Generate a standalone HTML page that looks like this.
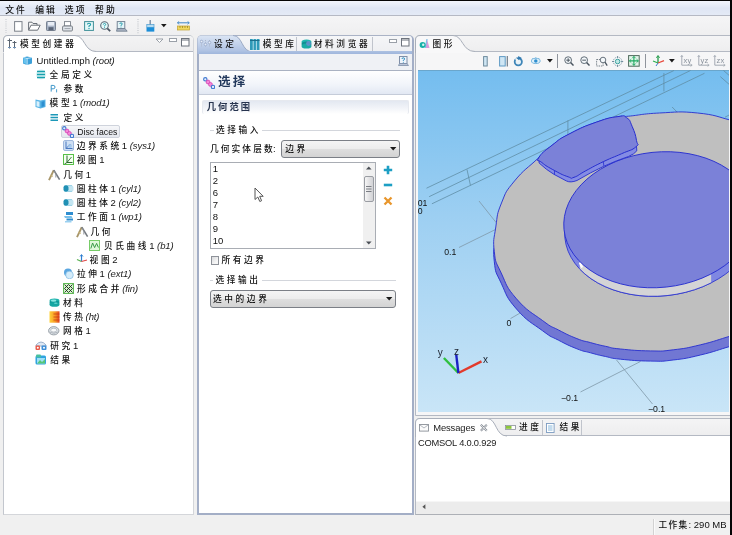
<!DOCTYPE html>
<html lang="zh">
<head>
<meta charset="utf-8">
<title>COMSOL Multiphysics</title>
<style>
*{box-sizing:border-box;margin:0;padding:0}
html,body{width:732px;height:535px;overflow:hidden;background:#f0f0f0}
body{position:relative;font-family:"Liberation Sans","Noto Sans CJK SC",sans-serif;font-size:9.5px;color:#121212}
#app{position:absolute;left:-4px;top:-4px;width:740px;height:543px;background:#f0f0f0;overflow:hidden;filter:blur(0.55px)}
#in{left:4px;top:4px;width:732px;height:535px}
#app div,#app span,#app svg{position:absolute}
#app span.c,#app i{position:static}
.c{font-size:8.7px;letter-spacing:2.6px;font-weight:500}
.t{white-space:nowrap;line-height:14px;height:14px}
.t i{letter-spacing:-0.1px;color:#222}
.panel{background:#fff;border:1px solid #b9bec8;border-radius:5px 5px 0 0}
</style>
</head>
<body>
<div id="app"><div id="in">
<div style="left:0;top:0;width:730px;height:15px;background:linear-gradient(#f4f7fd,#dfe6f4 55%,#e4eaf6)"></div>
<div class="t" style="left:5.2px;top:2.6px;font-size:8.8px;letter-spacing:2.1px;font-weight:500;color:#111">文件</div>
<div class="t" style="left:35.2px;top:2.6px;font-size:8.8px;letter-spacing:2.1px;font-weight:500;color:#111">编辑</div>
<div class="t" style="left:64.8px;top:2.6px;font-size:8.8px;letter-spacing:2.1px;font-weight:500;color:#111">选项</div>
<div class="t" style="left:95px;top:2.6px;font-size:8.8px;letter-spacing:2.1px;font-weight:500;color:#111">帮助</div>
<div style="left:0;top:15px;width:730px;height:1px;background:#b5b9c4"></div>
<div style="left:-4px;top:-4px;width:740px;height:5.3px;background:#050505"></div>
<div style="left:0;top:16px;width:730px;height:19px;background:linear-gradient(#f5f5f6,#efeff0)"></div>
<svg style="left:5px;top:19px" width="2" height="14" viewBox="0 0 2 14"><path d="M1 0V14" stroke="#c9ccd2" stroke-width="1.2" stroke-dasharray="1 1.2"/></svg>
<svg style="left:13.5px;top:20.5px" width="9" height="11" viewBox="0 0 9 11"><rect x="0.6" y="0.6" width="7.4" height="9.6" fill="#fff" stroke="#7c828a" stroke-width="1"/></svg>
<svg style="left:28px;top:21px" width="13" height="10" viewBox="0 0 13 10"><path d="M0.6 9.2V1.2H4L5 2.5H9V4.2" fill="#fafafa" stroke="#6a7078" stroke-width="1"/><path d="M0.6 9.2L3 4.2H12.2L9.6 9.2Z" fill="#fff" stroke="#6a7078" stroke-width="1"/></svg>
<svg style="left:45.5px;top:20.8px" width="10" height="10" viewBox="0 0 10 10"><rect x="0.5" y="0.5" width="9" height="9" rx="0.8" fill="#a9b4c6" stroke="#6e7888" stroke-width="0.9"/><rect x="2" y="1" width="6" height="3.6" fill="#e8edf5"/><rect x="2.5" y="6.2" width="5" height="3" fill="#596477"/></svg>
<svg style="left:61.5px;top:20.5px" width="11" height="11" viewBox="0 0 11 11"><rect x="2.5" y="0.6" width="6" height="4.4" fill="#fff" stroke="#7c828a" stroke-width="0.9"/><rect x="0.6" y="5" width="9.8" height="5" rx="1" fill="#e2e6ec" stroke="#6e747c" stroke-width="0.9"/><path d="M2.5 7.6H8.5" stroke="#8a9098" stroke-width="0.8"/></svg>
<svg style="left:84px;top:20.8px" width="10" height="10" viewBox="0 0 10 10"><rect x="0.6" y="0.6" width="8.8" height="8.8" fill="#e4f8f8" stroke="#3f8f98" stroke-width="1"/><path d="M3.4 3.6Q3.4 2.2 5 2.2Q6.6 2.2 6.6 3.6Q6.6 4.5 5 5.1V6" stroke="#1f9aa8" fill="none" stroke-width="1.1"/><circle cx="5" cy="7.5" r="0.65" fill="#1f9aa8"/></svg>
<svg style="left:100px;top:20.5px" width="11" height="11" viewBox="0 0 11 11"><circle cx="4.5" cy="4.5" r="3.8" fill="#e4f8f8" stroke="#5a6a78" stroke-width="1.1"/><path d="M7.3 7.3L10.2 10.2" stroke="#4a5562" stroke-width="1.7"/><path d="M3.3 3.6Q3.3 2.5 4.5 2.5Q5.7 2.5 5.7 3.6Q5.7 4.3 4.5 4.7V5.3" stroke="#1f9aa8" fill="none" stroke-width="0.9"/><circle cx="4.5" cy="6.3" r="0.5" fill="#1f9aa8"/></svg>
<svg style="left:116px;top:20.5px" width="12" height="11" viewBox="0 0 12 11"><rect x="1.2" y="0.6" width="7.6" height="7" fill="#e4f4f8" stroke="#6a7a8c" stroke-width="0.9"/><path d="M0.5 10.2H11.2L9 7.6H1.2Z" fill="#aab4c4" stroke="#6a7a8c" stroke-width="0.8"/><path d="M3.7 3Q3.7 1.9 5 1.9Q6.3 1.9 6.3 3Q6.3 3.8 5 4.2V4.9" stroke="#1f9aa8" fill="none" stroke-width="0.9"/><circle cx="5" cy="6" r="0.5" fill="#1f9aa8"/></svg>
<svg style="left:136.5px;top:18.5px" width="2" height="15" viewBox="0 0 2 15"><path d="M1 0V15" stroke="#c4c7cd" stroke-width="1.2" stroke-dasharray="1 1.2"/></svg>
<svg style="left:146px;top:20px" width="9" height="12" viewBox="0 0 9 12"><path d="M4.2 0V5" stroke="#7a8fa8" stroke-width="1.4"/><rect x="0.8" y="4.6" width="7.2" height="3" fill="#b8dcf0" stroke="#4a9ad0" stroke-width="0.7"/><rect x="0.5" y="7.4" width="7.8" height="4.2" fill="#1c8ed8"/></svg>
<svg style="left:160.8px;top:23.8px" width="6" height="4" viewBox="0 0 6 4"><path d="M0 0H5.6L2.8 3.3Z" fill="#1a1a1a"/></svg>
<svg style="left:176.5px;top:21px" width="13" height="10" viewBox="0 0 13 10"><path d="M0.5 1.8H12.2" stroke="#3f86c8" stroke-width="1"/><path d="M2.2 0.3L0.4 1.8L2.2 3.3M10.5 0.3L12.3 1.8L10.5 3.3" stroke="#3f86c8" fill="none" stroke-width="0.8"/><rect x="0.5" y="5" width="12" height="4" fill="#f0d860" stroke="#c0a030" stroke-width="0.7"/><path d="M3 5V7M5.5 5V7M8 5V7M10.5 5V7" stroke="#9a8020" stroke-width="0.7"/></svg>
<div class="panel" style="left:3px;top:35px;width:191px;height:480px;border-color:#c3c7ce #d4d6da #d4d6da #c3c7ce"></div>
<div style="left:4px;top:36px;width:189px;height:15px;background:linear-gradient(#f3f3f4,#ededee);border-radius:4px 4px 0 0"></div>
<div style="left:4px;top:51px;width:189px;height:1px;background:#b4b9c3"></div>
<svg style="left:3px;top:35px" width="100" height="18" viewBox="0 0 100 18"><path d="M0.5 17 L0.5 5 Q0.5 0.5 5 0.5 L72 0.5 C82 0.5 81 16.5 93 16.5 L93 18 L0.5 18 Z" fill="#fff"/><path d="M0.5 17 L0.5 5 Q0.5 0.5 5 0.5 L72 0.5 C82 0.5 81 16.5 93 16.5" fill="none" stroke="#a9afba" stroke-width="1"/></svg>
<svg style="left:7px;top:38px" width="10" height="11" viewBox="0 0 10 11"><path d="M2.5 0.5V10.5M0.5 2.5H5M7.5 3V10.5M5.5 4.5H9.5" stroke="#5a6470" stroke-width="1" fill="none"/><path d="M1 9.5H4M6 9.5H9" stroke="#6a8fb8" stroke-width="1"/></svg>
<div class="t" style="left:20px;top:37.3px;color:#111"><span class="c">模型创建器</span></div>
<svg style="left:155px;top:38px" width="9" height="6" viewBox="0 0 9 6"><path d="M1 1H8L4.5 4.5Z" fill="#fff" stroke="#9aa0a8" stroke-width="1"/></svg>
<svg style="left:169px;top:38px" width="9" height="5" viewBox="0 0 9 5"><rect x="0.5" y="0.5" width="7" height="3" fill="#fff" stroke="#9aa0a8"/></svg>
<svg style="left:181px;top:38px" width="9" height="9" viewBox="0 0 9 9"><rect x="0.5" y="0.5" width="7.5" height="7.5" fill="#fff" stroke="#6d737c"/><path d="M0.5 2H8" stroke="#6d737c"/></svg>
<svg style="left:22px;top:54.8px" width="11" height="11" viewBox="0 0 11 11"><path d="M1 2.5L5 1.5L10 2.5V8.5L5 10L1 8.5Z" fill="#3b9fd8"/><path d="M1 2.5L5 3.5L10 2.5" stroke="#bfe6fa" fill="none"/><path d="M5 3.5V10" stroke="#d9f1ff"/><path d="M1.5 3L4.5 4V9L1.5 8Z" fill="#69c3ee"/></svg>
<div class="t" style="left:36.6px;top:53.7px">Untitled.mph <i>(root)</i></div>
<svg style="left:36px;top:69.03999999999999px" width="10" height="11" viewBox="0 0 10 11"><circle cx="5" cy="5.5" r="5" fill="#bfe9ee" opacity="0.6"/><path d="M1 2.5H9M1 5.5H9M1 8.5H9" stroke="#17a0ad" stroke-width="1.7"/></svg>
<div class="t" style="left:49.6px;top:67.9px"><span class="c">全局定义</span></div>
<svg style="left:50.4px;top:83.28px" width="8" height="11" viewBox="0 0 8 11"><path d="M1.2 8.6V2.4H3.2Q5 2.4 5 4.1Q5 5.8 3.2 5.8H1.2" fill="none" stroke="#3a94c8" stroke-width="1"/><path d="M6.6 6.2V9.4" stroke="#3a94c8" stroke-width="0.9"/></svg>
<div class="t" style="left:63.5px;top:82.2px"><span class="c">参数</span></div>
<svg style="left:35px;top:97.52px" width="11" height="11" viewBox="0 0 11 11"><path d="M0.5 1.5L5.5 2.5L10.5 1.5V9L5.5 10.5L0.5 9Z" fill="#58b4e6"/><path d="M1.5 3L4.5 3.8V9L1.5 8.2Z" fill="#d8f0fc"/><path d="M6.5 3.8L9.5 3V8.2L6.5 9Z" fill="#2d8fd0"/></svg>
<div class="t" style="left:49.6px;top:96.4px"><span class="c">模型</span>1 <i>(mod1)</i></div>
<svg style="left:50.4px;top:111.75999999999999px" width="9" height="11" viewBox="0 0 9 11"><path d="M0.5 2.8H8M0.5 5.5H8M0.5 8.2H8" stroke="#1c98b8" stroke-width="1.5"/></svg>
<div class="t" style="left:63.5px;top:110.7px"><span class="c">定义</span></div>
<div style="left:60.5px;top:125.2px;width:59px;height:12.6px;background:linear-gradient(#f6f7f9,#e4e7ee);border:1px solid #cfd3dc;border-radius:2px"></div>
<svg style="left:62px;top:126.0px" width="12" height="12" viewBox="0 0 12 12"><path d="M2 2L10 10" stroke="#4a7fd0" stroke-width="1.4"/><circle cx="2.3" cy="2.3" r="1.7" fill="#eaf2ff" stroke="#3f78d0" stroke-width="1.1"/><circle cx="5" cy="5" r="1.9" fill="#f48ad8" stroke="#d848b8" stroke-width="0.9"/><circle cx="7.4" cy="7.4" r="1.9" fill="#f48ad8" stroke="#d848b8" stroke-width="0.9"/><circle cx="10" cy="10" r="1.7" fill="#eaf2ff" stroke="#3f78d0" stroke-width="1.1"/></svg>
<div class="t" style="left:77.3px;top:124.9px"><span style="position:static;font-size:8.7px">Disc faces</span></div>
<svg style="left:62.5px;top:140.24px" width="11" height="11" viewBox="0 0 11 11"><rect x="0.5" y="0.5" width="10" height="10" rx="1.5" fill="#cfe0f4" stroke="#9fb8dc"/><path d="M3 1.5V8.5H9.5" stroke="#4a78c0" fill="none"/><path d="M3 8.5L7.5 4" stroke="#4a78c0"/><circle cx="7" cy="6" r="2" fill="#9fc4ea" opacity="0.8"/></svg>
<div class="t" style="left:76.7px;top:139.1px"><span class="c">边界系统</span>1 <i>(sys1)</i></div>
<svg style="left:62.5px;top:154.48000000000002px" width="11" height="11" viewBox="0 0 11 11"><rect x="0.5" y="0.5" width="10" height="10" fill="#f4fff0" stroke="#58c048"/><path d="M4 1.5V8.5H9.5" stroke="#2c6a30" fill="none"/><path d="M4 8.5L1.5 10M4 8.5L8.5 3" stroke="#2c6a30" stroke-width="0.9"/></svg>
<div class="t" style="left:76.7px;top:153.4px"><span class="c">视图</span>1</div>
<svg style="left:48.4px;top:168.72px" width="13" height="12" viewBox="0 0 13 12"><path d="M1 11.2L5.8 1.2" stroke="#a8966a" stroke-width="1.9"/><path d="M5.8 1.2L11.6 10.6" stroke="#74797f" stroke-width="1.6"/><path d="M5.8 1.5Q9 4.5 7.8 8.5" stroke="#8a8f96" stroke-width="0.9" fill="none"/><path d="M2.2 6.2L5 7.4" stroke="#c8b478" stroke-width="1"/></svg>
<div class="t" style="left:63.2px;top:167.6px"><span class="c">几何</span>1</div>
<svg style="left:62.8px;top:182.95999999999998px" width="11" height="11" viewBox="0 0 11 11"><rect x="1" y="2.2" width="9.5" height="6.6" rx="2.6" fill="#c4e6f2"/><rect x="0.5" y="2.2" width="5" height="6.6" rx="2.2" fill="#2090b4"/><path d="M4.5 2.6H9M4.5 8.4H9" stroke="#86c8e0" stroke-width="0.8"/></svg>
<div class="t" style="left:76.7px;top:181.9px"><span class="c">圆柱体</span>1 <i>(cyl1)</i></div>
<svg style="left:62.8px;top:197.2px" width="11" height="11" viewBox="0 0 11 11"><rect x="1" y="2.2" width="9.5" height="6.6" rx="2.6" fill="#c4e6f2"/><rect x="0.5" y="2.2" width="5" height="6.6" rx="2.2" fill="#2090b4"/><path d="M4.5 2.6H9M4.5 8.4H9" stroke="#86c8e0" stroke-width="0.8"/></svg>
<div class="t" style="left:76.7px;top:196.1px"><span class="c">圆柱体</span>2 <i>(cyl2)</i></div>
<svg style="left:62.8px;top:211.44px" width="11" height="12" viewBox="0 0 11 12"><path d="M3 1H10V4H3Z" fill="#2f8ed0"/><path d="M1 5H8.5L9.5 7H2Z" fill="#78c0ea"/><path d="M3.5 7.5H10V9.5H3.5Z" fill="#2f8ed0"/><path d="M2 10H8.5V11.5H2Z" fill="#9ad0f0"/></svg>
<div class="t" style="left:76.7px;top:210.3px"><span class="c">工作面</span>1 <i>(wp1)</i></div>
<svg style="left:75.5px;top:225.68px" width="13" height="12" viewBox="0 0 13 12"><path d="M1 11.2L5.8 1.2" stroke="#a8966a" stroke-width="1.9"/><path d="M5.8 1.2L11.6 10.6" stroke="#74797f" stroke-width="1.6"/><path d="M5.8 1.5Q9 4.5 7.8 8.5" stroke="#8a8f96" stroke-width="0.9" fill="none"/><path d="M2.2 6.2L5 7.4" stroke="#c8b478" stroke-width="1"/></svg>
<div class="t" style="left:90.5px;top:224.6px"><span class="c">几何</span></div>
<svg style="left:89.4px;top:239.92000000000002px" width="11" height="11" viewBox="0 0 11 11"><rect x="0.5" y="0.5" width="10" height="10" fill="#e0f8da" stroke="#78cc68"/><path d="M1.8 8.5L3.6 3L5.6 7.6L7.6 3.4L9.4 7.5" stroke="#3a9a48" fill="none" stroke-width="1"/></svg>
<div class="t" style="left:104px;top:238.8px"><span class="c">贝氏曲线</span>1 <i>(b1)</i></div>
<svg style="left:75.5px;top:254.16000000000003px" width="12" height="11" viewBox="0 0 12 11"><path d="M5.5 1V7.5" stroke="#2f7fd0" stroke-width="1.2"/><path d="M5.5 7.5L1 5.5" stroke="#58b050" stroke-width="1.1"/><path d="M5.5 7.5L11 6" stroke="#e04848" stroke-width="1.1"/><path d="M4 2.5L5.5 0.5L7 2.5" stroke="#2f7fd0" fill="none" stroke-width="0.9"/></svg>
<div class="t" style="left:89.6px;top:253.1px"><span class="c">视图</span>2</div>
<svg style="left:62.8px;top:268.4px" width="11" height="11" viewBox="0 0 11 11"><circle cx="5" cy="4.5" r="4" fill="#5aa6e0"/><circle cx="6.5" cy="7" r="3.8" fill="#d4ecfa" stroke="#8cc0e4" stroke-width="0.8"/></svg>
<div class="t" style="left:77px;top:267.3px"><span class="c">拉伸</span>1 <i>(ext1)</i></div>
<svg style="left:62.5px;top:282.64px" width="11" height="11" viewBox="0 0 11 11"><rect x="0.5" y="0.5" width="10" height="10" fill="#d6f4ce" stroke="#62bc58"/><path d="M1.5 9.5L9.5 1.5M1.5 5.5L5.5 1.5M5.5 9.5L9.5 5.5M1.5 1.5L9.5 9.5M1.5 5.5L5.5 9.5M5.5 1.5L9.5 5.5" stroke="#1c2a1c" stroke-width="0.9"/></svg>
<div class="t" style="left:77px;top:281.5px"><span class="c">形成合并</span><i>(fin)</i></div>
<svg style="left:48.7px;top:296.88px" width="11" height="11" viewBox="0 0 11 11"><ellipse cx="5.5" cy="4" rx="5" ry="2.4" fill="#1fb2ac"/><ellipse cx="5.5" cy="5.8" rx="5" ry="2.4" fill="#0f9696"/><ellipse cx="5.5" cy="7.4" rx="5" ry="2.4" fill="#16a6a2"/><ellipse cx="4.6" cy="3.7" rx="2.8" ry="1.1" fill="#8ae6e0"/><ellipse cx="6.8" cy="6.2" rx="1.8" ry="0.8" fill="#5fd0cc"/></svg>
<div class="t" style="left:63px;top:295.8px"><span class="c">材料</span></div>
<svg style="left:48.7px;top:311.12px" width="11" height="12" viewBox="0 0 11 12"><defs><linearGradient id="hg" x1="0" x2="1" y1="0" y2="0"><stop offset="0" stop-color="#ffd23a"/><stop offset="0.55" stop-color="#f79a24"/><stop offset="1" stop-color="#e0401c"/></linearGradient></defs><rect x="0.5" y="0.3" width="10" height="11.4" fill="url(#hg)"/><path d="M4.5 3H10.5M4.5 6H10.5M4.5 9H10.5" stroke="#c02c10" stroke-width="0.9" opacity="0.75"/></svg>
<div class="t" style="left:63px;top:310.0px"><span class="c">传热</span><i>(ht)</i></div>
<svg style="left:48px;top:326.36px" width="11.5" height="9.5" viewBox="0 0 13 11"><ellipse cx="6.5" cy="5.5" rx="6" ry="4.8" fill="#dfe4e8" stroke="#8f979f"/><ellipse cx="6.5" cy="4.8" rx="3.6" ry="2.2" fill="#f8fafb" stroke="#a3abb3" stroke-width="0.8"/><path d="M1.5 7Q6.5 10 11.5 7" stroke="#9aa2aa" fill="none" stroke-width="0.8"/></svg>
<div class="t" style="left:63px;top:324.3px"><span class="c">网格</span>1</div>
<svg style="left:34.8px;top:339.6px" width="12" height="11" viewBox="0 0 12 11"><path d="M1 5Q6 -1 11 5V6H1Z" fill="#dfe9f4" stroke="#88a0c0" stroke-width="0.8"/><rect x="0.5" y="5.5" width="4.5" height="4.5" rx="1" fill="#e85a4a"/><rect x="6.5" y="5.5" width="5" height="4.5" rx="1" fill="#3f8fd8"/><circle cx="2.8" cy="7.8" r="1" fill="#fff"/><circle cx="9" cy="7.8" r="1" fill="#fff"/></svg>
<div class="t" style="left:50.3px;top:338.5px"><span class="c">研究</span>1</div>
<svg style="left:35px;top:353.84000000000003px" width="12" height="11" viewBox="0 0 12 11"><rect x="0.5" y="1.5" width="10.5" height="9" rx="1.5" fill="#2fa4e0"/><rect x="2" y="4" width="8" height="5.5" fill="#9fe0f8"/><rect x="1" y="0.5" width="5" height="3" rx="1" fill="#48c0a0"/><path d="M2 9.5L5 6L7 8L10 5V9.5Z" fill="#58c878"/></svg>
<div class="t" style="left:50.3px;top:352.7px"><span class="c">结果</span></div>
<div style="left:196.5px;top:35px;width:217px;height:480px;background:#fff;border:2px solid #a3aec6;border-top:1px solid #aab3c6;border-radius:5px 5px 0 0"></div>
<div style="left:198.5px;top:36px;width:213px;height:15.5px;background:linear-gradient(#f5f6f8,#eeeff2);border-radius:4px 4px 0 0"></div>
<svg style="left:197px;top:35px" width="62" height="19" viewBox="0 0 62 19"><defs><linearGradient id="tg" x1="0" x2="0" y1="0" y2="1"><stop offset="0" stop-color="#dbe5f4"/><stop offset="1" stop-color="#a6bbdf"/></linearGradient></defs><path d="M0.5 19 L0.5 5 Q0.5 0.5 5 0.5 L36 0.5 C46 0.5 44 17 56 17 L62 17 L62 19 Z" fill="url(#tg)"/><path d="M36 0.5 C46 0.5 44 17 56 17" fill="none" stroke="#9aa9c4" stroke-width="1"/></svg>
<div style="left:198.5px;top:51px;width:213px;height:2.5px;background:linear-gradient(#adc1e2,#9fb6dc)"></div>
<div style="left:198.5px;top:53.5px;width:213px;height:16.5px;background:#eff1f5"></div>
<div style="left:198.5px;top:70px;width:213px;height:1px;background:#aab2c2"></div>
<svg style="left:200px;top:39px" width="12" height="9" viewBox="0 0 12 9"><path d="M1.5 1V8M5.5 1V8M9.5 1V8" stroke="#aeb8cc" stroke-width="1" stroke-dasharray="1.2 1"/><circle cx="1.5" cy="2.5" r="1.3" fill="#e8eef8" stroke="#8fa2c4" stroke-width="0.7"/><circle cx="5.5" cy="5.5" r="1.3" fill="#e8eef8" stroke="#8fa2c4" stroke-width="0.7"/><circle cx="9.5" cy="3.5" r="1.3" fill="#e8eef8" stroke="#8fa2c4" stroke-width="0.7"/></svg>
<div class="t" style="left:214px;top:37.3px;color:#111"><span class="c">设定</span></div>
<svg style="left:250px;top:38.5px" width="10" height="11" viewBox="0 0 10 11"><rect x="0" y="0" width="9.5" height="11" fill="#2f9ab8"/><path d="M3.2 0V11M6.4 0V11" stroke="#bfe4ee" stroke-width="0.9"/><path d="M0 1.5H9.5" stroke="#1c6f8c" stroke-width="1"/></svg>
<div class="t" style="left:262.7px;top:37.3px;color:#111"><span class="c">模型库</span></div>
<div style="left:296px;top:37px;width:1px;height:14px;background:#c0c4cc"></div>
<svg style="left:300.5px;top:39px" width="11" height="10" viewBox="0 0 11 10"><ellipse cx="5.5" cy="3" rx="5" ry="2.6" fill="#1fb6b0"/><ellipse cx="5.5" cy="5" rx="5" ry="2.6" fill="#0f8f92"/><ellipse cx="5.5" cy="7" rx="5" ry="2.6" fill="#18aaa6"/><circle cx="7.5" cy="4.5" r="2.4" fill="#6a8fd0" opacity="0.85"/></svg>
<div class="t" style="left:313.8px;top:37.3px;color:#111"><span class="c">材料浏览器</span></div>
<div style="left:371.5px;top:37px;width:1px;height:14px;background:#c0c4cc"></div>
<svg style="left:389px;top:38.5px" width="9" height="5" viewBox="0 0 9 5"><rect x="0.5" y="0.5" width="7" height="3" fill="#fff" stroke="#9aa0a8"/></svg>
<svg style="left:400.5px;top:38px" width="9" height="9" viewBox="0 0 9 9"><rect x="0.5" y="0.5" width="7.5" height="7.5" fill="#fff" stroke="#6d737c"/><path d="M0.5 2H8" stroke="#6d737c"/></svg>
<svg style="left:398px;top:55.5px" width="11" height="11" viewBox="0 0 11 11"><rect x="1.5" y="0.5" width="7.5" height="7" fill="#eef4fb" stroke="#7f8fa8"/><path d="M0.5 9.5H10.5L9 7.5H1.5Z" fill="#b8c4d8" stroke="#7f8fa8" stroke-width="0.8"/><path d="M4 3Q4 1.8 5.3 1.8Q6.6 1.8 6.6 3Q6.6 3.8 5.3 4.3V5" stroke="#2f8fc0" fill="none" stroke-width="1"/><circle cx="5.3" cy="6.2" r="0.5" fill="#2f8fc0"/></svg>
<div style="left:198.5px;top:71px;width:213px;height:23px;background:linear-gradient(#ffffff,#f1f4fa 60%,#e2e8f3)"></div>
<div style="left:198.5px;top:94px;width:213px;height:1px;background:#c5ccd9"></div>
<svg style="left:203px;top:76.5px" width="12" height="12" viewBox="0 0 12 12"><path d="M2 2L10 10" stroke="#4a7fd0" stroke-width="1.4"/><circle cx="2.3" cy="2.3" r="1.7" fill="#eaf2ff" stroke="#3f78d0" stroke-width="1.1"/><circle cx="5" cy="5" r="1.9" fill="#f48ad8" stroke="#d848b8" stroke-width="0.9"/><circle cx="7.4" cy="7.4" r="1.9" fill="#f48ad8" stroke="#d848b8" stroke-width="0.9"/><circle cx="10" cy="10" r="1.7" fill="#eaf2ff" stroke="#3f78d0" stroke-width="1.1"/></svg>
<div class="t" style="left:218px;top:74.7px;font-size:12.5px;font-weight:bold;color:#22385c;line-height:15px;height:15px;letter-spacing:2.2px">选择</div>
<div style="left:202px;top:99.5px;width:207px;height:14px;background:linear-gradient(#e3e8f1,#f3f5f9 60%,#ffffff);border:1px solid #e6e9ef;border-bottom:none;border-radius:2px"></div>
<div class="t" style="left:206.8px;top:99.8px;font-weight:bold;color:#27344f"><span class="c" style="font-size:9.3px;font-weight:bold;letter-spacing:2px">几何范围</span></div>
<div style="left:209.5px;top:130px;width:190.5px;height:1px;background:#d3d6dc"></div>
<div class="t" style="left:213.5px;top:123.2px;background:#fff;padding:0 1px 0 2.5px"><span class="c">选择输入</span></div>
<div class="t" style="left:210px;top:141.6px"><span class="c" style="letter-spacing:2.1px">几何实体层数</span><span style="position:static;margin-left:-1.8px">:</span></div>
<div style="left:281px;top:140px;width:119px;height:17.7px;border:1px solid #7b7f86;border-radius:3px;background:linear-gradient(#f4f4f4,#ececec 48%,#dedede 52%,#d3d3d3)"></div>
<div class="t" style="left:285.3px;top:141.8px"><span class="c">边界</span></div>
<svg style="left:389.5px;top:147.04999999999998px" width="7" height="4" viewBox="0 0 7 4"><path d="M0 0H6.4L3.2 3.6Z" fill="#1a1a1a"/></svg>
<div style="left:209.5px;top:162.3px;width:166px;height:86.5px;background:#fff;border:1px solid #a9adb4"></div>
<div class="t" style="left:212.8px;top:161.6px;font-size:9.5px">1</div>
<div class="t" style="left:212.8px;top:173.7px;font-size:9.5px">2</div>
<div class="t" style="left:212.8px;top:185.8px;font-size:9.5px">6</div>
<div class="t" style="left:212.8px;top:197.9px;font-size:9.5px">7</div>
<div class="t" style="left:212.8px;top:210.0px;font-size:9.5px">8</div>
<div class="t" style="left:212.8px;top:222.1px;font-size:9.5px">9</div>
<div class="t" style="left:212.8px;top:234.2px;font-size:9.5px">10</div>
<div style="left:363px;top:163.3px;width:11.5px;height:84.5px;background:#f0f0f0"></div>
<div style="left:363.5px;top:175.5px;width:10.5px;height:26.5px;border:1px solid #9a9da3;border-radius:2px;background:linear-gradient(90deg,#f6f6f6,#e2e2e4 50%,#d2d3d6)"></div>
<svg style="left:366px;top:185.5px" width="6" height="7" viewBox="0 0 6 7"><path d="M0 0.5H5.5M0 3H5.5M0 5.5H5.5" stroke="#6e7278" stroke-width="0.9"/></svg>
<svg style="left:366px;top:166px" width="6" height="4" viewBox="0 0 6 4"><path d="M0 3.5L2.8 0.5L5.6 3.5Z" fill="#4a4e55"/></svg>
<svg style="left:366px;top:241px" width="6" height="4" viewBox="0 0 6 4"><path d="M0 0.5L2.8 3.5L5.6 0.5Z" fill="#4a4e55"/></svg>
<svg style="left:382.5px;top:164.5px" width="10" height="10" viewBox="0 0 10 10"><path d="M5 0.8V9.2M0.8 5H9.2" stroke="#1d9fc4" stroke-width="2.6"/></svg>
<svg style="left:382.5px;top:183px" width="10" height="4" viewBox="0 0 10 4"><path d="M0.8 2H9.2" stroke="#1d9fc4" stroke-width="2.6"/></svg>
<svg style="left:382.5px;top:195.5px" width="10" height="10" viewBox="0 0 10 10"><path d="M1.5 1.5L8.5 8.5M8.5 1.5L1.5 8.5" stroke="#e8962c" stroke-width="2.3"/></svg>
<div style="left:210.5px;top:256px;width:8.8px;height:8.8px;border:1px solid #8e9299;background:linear-gradient(135deg,#d8d9dc,#f6f6f6 70%)"></div>
<div class="t" style="left:221.4px;top:253.3px"><span class="c">所有边界</span></div>
<div style="left:209.5px;top:279.5px;width:186.5px;height:1px;background:#d3d6dc"></div>
<div class="t" style="left:213px;top:272.5px;background:#fff;padding:0 1px 0 2.5px"><span class="c">选择输出</span></div>
<div style="left:209.5px;top:290.3px;width:186.5px;height:17.4px;border:1px solid #7b7f86;border-radius:3px;background:linear-gradient(#f4f4f4,#ececec 48%,#dedede 52%,#d3d3d3)"></div>
<div class="t" style="left:213px;top:292.0px"><span class="c">选中的边界</span></div>
<svg style="left:385.5px;top:297.2px" width="7" height="4" viewBox="0 0 7 4"><path d="M0 0H6.4L3.2 3.6Z" fill="#1a1a1a"/></svg>
<svg style="left:254px;top:187px" width="10" height="16" viewBox="0 0 10 16"><path d="M1 1V12.5L3.8 10L5.8 14.5L7.6 13.7L5.7 9.3H9.2Z" fill="#fff" stroke="#555" stroke-width="1" stroke-linejoin="round"/></svg>
<div class="panel" style="left:415px;top:35px;width:320px;height:381px;border-color:#b4b9c3;background:#f6f6f7"></div>
<div style="left:416px;top:36px;width:314px;height:15px;background:linear-gradient(#f4f4f5,#eeeeef);border-radius:4px 0 0 0"></div>
<div style="left:416px;top:51px;width:314px;height:1px;background:#b4b9c3"></div>
<svg style="left:415px;top:35px" width="70" height="18" viewBox="0 0 70 18"><path d="M0.5 18 L0.5 5 Q0.5 0.5 5 0.5 L38 0.5 C48 0.5 47 16.5 60 16.5 L60 18 Z" fill="#f8f8f9"/><path d="M0.5 18 L0.5 5 Q0.5 0.5 5 0.5 L38 0.5 C48 0.5 47 16.5 60 16.5" fill="none" stroke="#a9afba" stroke-width="1"/></svg>
<svg style="left:419px;top:38px" width="11" height="11" viewBox="0 0 11 11"><path d="M6 10L8 1L10.5 10Z" fill="#d99ad8"/><path d="M6.2 10L8 1" stroke="#7ac0e8" stroke-width="1.2"/><circle cx="3.6" cy="7" r="3" fill="#18b0a8"/><circle cx="4.2" cy="6.8" r="1.2" fill="#d8f4f0"/></svg>
<div class="t" style="left:432.5px;top:37.3px;color:#111"><span class="c">图形</span></div>
<svg style="left:483px;top:55.5px" width="5" height="11" viewBox="0 0 5 11"><rect x="0.6" y="0.6" width="3.6" height="9.4" fill="#cfe6f4" stroke="#6e8a9c" stroke-width="1"/></svg>
<svg style="left:498.5px;top:55.5px" width="10" height="11" viewBox="0 0 10 11"><rect x="0.6" y="0.6" width="5.6" height="9.4" fill="#cfe6f4" stroke="#5f9ac4" stroke-width="1"/><path d="M8.3 0V10.6" stroke="#6e7a86" stroke-width="1.2"/></svg>
<svg style="left:513px;top:55.5px" width="11" height="11" viewBox="0 0 11 11"><circle cx="5.3" cy="5.8" r="3.6" fill="#e8f2f8" stroke="#3f86b8" stroke-width="1.8"/><path d="M5.2 0L8.8 2L5.2 4.2Z" fill="#2f78b0"/><path d="M2.5 2.2L5.3 5.8" stroke="#f4f4f4" stroke-width="1.6"/></svg>
<svg style="left:531.2px;top:57px" width="9.6" height="7.9" viewBox="0 0 11 9"><ellipse cx="5.5" cy="4.5" rx="5" ry="3" fill="#dff0fa" stroke="#5fa8d8" stroke-width="0.9"/><circle cx="5.5" cy="4.5" r="2" fill="#2f8fd0"/><path d="M1.5 1.2L2.5 2.3M5.5 0V1.3M9.5 1.2L8.5 2.3" stroke="#5fa8d8" stroke-width="0.8"/></svg>
<svg style="left:546.5px;top:59px" width="6" height="4" viewBox="0 0 6 4"><path d="M0 0H5.8L2.9 3.4Z" fill="#1a1a1a"/></svg>
<div style="left:557px;top:54px;width:1px;height:14px;background:#8f949c"></div>
<svg style="left:563.5px;top:55.7px" width="10.4" height="10.4" viewBox="0 0 12 12"><circle cx="4.8" cy="4.8" r="3.9" fill="#f4f8fb" stroke="#5a6570" stroke-width="1.1"/><path d="M7.6 7.6L11 11" stroke="#4a5560" stroke-width="1.7"/><path d="M2.6 4.8H7M4.8 2.6V7" stroke="#3a4650" stroke-width="1"/></svg>
<svg style="left:580px;top:55.7px" width="10.4" height="10.4" viewBox="0 0 12 12"><circle cx="4.8" cy="4.8" r="3.9" fill="#f4f8fb" stroke="#5a6570" stroke-width="1.1"/><path d="M7.6 7.6L11 11" stroke="#4a5560" stroke-width="1.7"/><path d="M2.6 4.8H7" stroke="#3a4650" stroke-width="1"/></svg>
<svg style="left:596px;top:55.5px" width="12" height="11" viewBox="0 0 12 11"><rect x="0.6" y="3.5" width="6.5" height="6.5" fill="none" stroke="#6a747e" stroke-width="0.9" stroke-dasharray="1.4 0.9"/><circle cx="7" cy="4" r="2.8" fill="#f4f8fb" stroke="#5a6570" stroke-width="0.9"/><path d="M9 6.2L11.2 9.6" stroke="#4a5560" stroke-width="1.3"/></svg>
<svg style="left:612px;top:55.5px" width="12" height="11" viewBox="0 0 12 11"><circle cx="5.6" cy="5.5" r="4.3" fill="none" stroke="#6a8a9c" stroke-width="0.8" stroke-dasharray="1.2 0.9"/><circle cx="5.6" cy="5.5" r="2.3" fill="#bfe8e4" stroke="#2f9a98" stroke-width="0.9"/><path d="M5.6 0V2M5.6 9V11M0 5.5H2M9.2 5.5H11.2" stroke="#5a7a8c" stroke-width="0.8"/></svg>
<svg style="left:628px;top:55px" width="12" height="12" viewBox="0 0 12 12"><rect x="0.6" y="0.6" width="10.6" height="10.6" fill="#e2f6ea" stroke="#4f6a5c" stroke-width="1"/><path d="M5.9 1.5V10.3M1.5 5.9H10.3" stroke="#1fa860" stroke-width="1.1"/><path d="M4.3 3.2L5.9 1.4L7.5 3.2M4.3 8.6L5.9 10.4L7.5 8.6M3.2 4.3L1.4 5.9L3.2 7.5M8.6 4.3L10.4 5.9L8.6 7.5" stroke="#1fa860" fill="none" stroke-width="0.9"/></svg>
<div style="left:645px;top:54px;width:1px;height:14px;background:#8f949c"></div>
<svg style="left:652px;top:55px" width="13" height="12" viewBox="0 0 13 12"><path d="M6 0.8V8" stroke="#1f9a48" stroke-width="1.3"/><path d="M4.3 2.8L6 0.6L7.7 2.8" stroke="#1f9a48" fill="none" stroke-width="0.9"/><path d="M6 8L1 6" stroke="#28b050" stroke-width="1.1"/><path d="M6 8L12 5.6" stroke="#e8483c" stroke-width="1.2"/><path d="M6 8L4 11" stroke="#3f78d0" stroke-width="1"/></svg>
<svg style="left:668.8px;top:59px" width="6" height="4" viewBox="0 0 6 4"><path d="M0 0H5.8L2.9 3.4Z" fill="#1a1a1a"/></svg>
<svg style="left:680px;top:55px" width="13" height="12" viewBox="0 0 13 12"><path d="M1.8 0.5V10.2H12" stroke="#9aa2ac" stroke-width="0.9" fill="none"/><path d="M0.6 2L1.8 0.4L3 2M10.5 9L12.2 10.2L10.5 11.4" stroke="#9aa2ac" stroke-width="0.7" fill="none"/><text x="3.6" y="7.6" font-size="7.6" fill="#8a929c" font-family="Liberation Sans, sans-serif">xy</text></svg>
<svg style="left:697px;top:55px" width="13" height="12" viewBox="0 0 13 12"><path d="M1.8 0.5V10.2H12" stroke="#9aa2ac" stroke-width="0.9" fill="none"/><path d="M0.6 2L1.8 0.4L3 2M10.5 9L12.2 10.2L10.5 11.4" stroke="#9aa2ac" stroke-width="0.7" fill="none"/><text x="3.6" y="7.6" font-size="7.6" fill="#8a929c" font-family="Liberation Sans, sans-serif">yz</text></svg>
<svg style="left:713px;top:55px" width="13" height="12" viewBox="0 0 13 12"><path d="M1.8 0.5V10.2H12" stroke="#9aa2ac" stroke-width="0.9" fill="none"/><path d="M0.6 2L1.8 0.4L3 2M10.5 9L12.2 10.2L10.5 11.4" stroke="#9aa2ac" stroke-width="0.7" fill="none"/><text x="3.6" y="7.6" font-size="7.6" fill="#8a929c" font-family="Liberation Sans, sans-serif">zx</text></svg>
<div style="left:729.5px;top:54px;width:1px;height:14px;background:#8f949c"></div>
<svg style="left:417.5px;top:70px" width="311.3" height="342.3" viewBox="417.5 70 311.3 342.3"><defs><linearGradient id="bg" x1="0" x2="0" y1="0" y2="1"><stop offset="0" stop-color="#74bdef"/><stop offset="0.45" stop-color="#9fd0f2"/><stop offset="1" stop-color="#c9e5f7"/></linearGradient></defs><rect x="417.5" y="70" width="311.3" height="342.3" fill="url(#bg)"/><rect x="417.5" y="70" width="311.3" height="1" fill="#6aa6cc"/><path d="M426 188.2L673.5 70.5" stroke="#5f8ea6" stroke-width="0.8" fill="none"/><path d="M428.6 196.7L690 70.5" stroke="#5f8ea6" stroke-width="0.8" fill="none"/><path d="M431.4 203.8L704 73.3" stroke="#5f8ea6" stroke-width="0.8" fill="none"/><path d="M466.5 169.5L470 185.5" stroke="#5f8ea6" stroke-width="0.8" fill="none"/><path d="M567.4 120.3L567.4 133.9" stroke="#5f8ea6" stroke-width="0.8" fill="none"/><path d="M663.4 73L663.4 91.4" stroke="#5f8ea6" stroke-width="0.8" fill="none"/><path d="M671.6 107L677 112.5" stroke="#5f8ea6" stroke-width="0.8" fill="none"/><path d="M719.8 76.6L730.5 86" stroke="#5f8ea6" stroke-width="0.8" fill="none"/><path d="M723 70.5L730.5 77" stroke="#5f8ea6" stroke-width="0.8" fill="none"/><path d="M724.5 117.2L730.5 114" stroke="#5f8ea6" stroke-width="0.8" fill="none"/><path d="M458.5 247.5L495 229.5" stroke="#7f98a8" stroke-width="0.8" fill="none"/><path d="M478.5 201L496 223" stroke="#7f98a8" stroke-width="0.8" fill="none"/><path d="M510 318.6L524 310.5" stroke="#7f98a8" stroke-width="0.8" fill="none"/><path d="M580 392L640 361.5" stroke="#7f98a8" stroke-width="0.8" fill="none"/><path d="M616 360L652 404" stroke="#7f98a8" stroke-width="0.8" fill="none"/><path d="M493.8 251.5C492.4 239.2 493.4 239.9 495.3 227C497.2 214.1 496.0 215.3 501 203C506.0 190.7 504.4 192.8 514 181C523.6 169.2 527.0 168.3 537 158.8C547.0 149.3 543.0 152.1 551.6 145.4C560.2 138.7 557.6 140.0 569.4 133.8C581.2 127.6 583.2 126.7 596 122.2C608.8 117.7 608.9 118.4 617.4 116.8C625.9 115.2 616.9 117.2 628 116.2C639.1 115.2 640.6 113.9 659 113C677.4 112.1 678.2 111.1 697 113C715.8 114.9 716.8 116.8 729.6 120C742.4 123.2 736.9 95.1 745 125C753.1 154.9 760.0 176.8 760 232C760.0 287.2 753.1 304.2 745 332C736.9 359.8 741.6 332.8 729.6 336.2C717.6 339.6 715.1 341.2 700 344.8C684.9 348.4 686.1 348.2 672.8 349.8C659.5 351.4 664.1 351.1 650 350.9C635.9 350.7 632.0 350.2 620 349C608.0 347.8 613.0 348.0 605 346.3C597.0 344.6 597.6 344.7 590 342.6C582.4 340.5 584.9 342.0 576.4 338.6C567.9 335.2 567.2 334.8 558 330C548.8 325.2 553.2 328.8 542 320.5C530.8 312.2 527.0 311.5 516 298.8C505.0 286.1 506.6 285.6 500.7 273C494.8 260.4 495.2 263.8 493.8 251.5Z" transform="translate(0 10.2)" fill="#7177d3" stroke="#262ecf" stroke-width="0.9"/><path d="M493.8 251.5C492.4 239.2 493.4 239.9 495.3 227C497.2 214.1 496.0 215.3 501 203C506.0 190.7 504.4 192.8 514 181C523.6 169.2 527.0 168.3 537 158.8C547.0 149.3 543.0 152.1 551.6 145.4C560.2 138.7 557.6 140.0 569.4 133.8C581.2 127.6 583.2 126.7 596 122.2C608.8 117.7 608.9 118.4 617.4 116.8C625.9 115.2 616.9 117.2 628 116.2C639.1 115.2 640.6 113.9 659 113C677.4 112.1 678.2 111.1 697 113C715.8 114.9 716.8 116.8 729.6 120C742.4 123.2 736.9 95.1 745 125C753.1 154.9 760.0 176.8 760 232C760.0 287.2 753.1 304.2 745 332C736.9 359.8 741.6 332.8 729.6 336.2C717.6 339.6 715.1 341.2 700 344.8C684.9 348.4 686.1 348.2 672.8 349.8C659.5 351.4 664.1 351.1 650 350.9C635.9 350.7 632.0 350.2 620 349C608.0 347.8 613.0 348.0 605 346.3C597.0 344.6 597.6 344.7 590 342.6C582.4 340.5 584.9 342.0 576.4 338.6C567.9 335.2 567.2 334.8 558 330C548.8 325.2 553.2 328.8 542 320.5C530.8 312.2 527.0 311.5 516 298.8C505.0 286.1 506.6 285.6 500.7 273C494.8 260.4 495.2 263.8 493.8 251.5Z" fill="#bfbfbf" stroke="#262ecf" stroke-width="0.9"/><g transform="rotate(-6 658.6 219.75)"><ellipse cx="658.6" cy="228.3" rx="95.6" ry="67.7" fill="#7f87e2" stroke="#262ecf" stroke-width="0.8"/></g><clipPath id="wc"><path d="M578.6 230 L710.3 230 L711 300 L580 300Z"/></clipPath><g clip-path="url(#wc)"><g transform="rotate(-6 658.6 219.75)"><ellipse cx="658.6" cy="228.3" rx="95.6" ry="67.7" fill="#d4d4d6" stroke="#2b33cf" stroke-width="0.8"/></g></g><path d="M579.3 262.5L581.6 267.5" stroke="#fff" stroke-width="2.2" fill="none"/><g transform="rotate(-6 658.6 219.75)"><ellipse cx="658.6" cy="219.75" rx="95.6" ry="67.7" fill="#7b81d8" stroke="#262ecf" stroke-width="0.9"/></g><path d="M538.3 157.4 L538.6 163 Q546 170 553.4 174.3 L566 181 Q570 183 576.5 180.5 Q590 172.5 603.2 166.3 Q616 160.5 628 156.5 Q634 154 636.3 150.8 L636 146 Z" fill="#848ce4" stroke="#262ecf" stroke-width="0.9" stroke-linejoin="round"/><path d="M538.3 157.6C541.2 152.7 542.8 152.0 551.6 145.2C560.4 138.4 556.8 140.1 569.4 133.6C582.0 127.1 582.4 126.9 596 122.1C609.6 117.3 608.8 117.8 617.4 116.6C626.0 115.4 622.2 115.1 626.2 117.8C630.2 120.5 628.8 119.9 631.6 126.3C634.4 132.7 635.0 134.7 636 140.5C637.0 146.3 639.6 143.1 635.3 146.9C631.0 150.7 630.0 149.7 620.9 153.8C611.8 157.9 613.3 156.7 603.2 161.5C593.1 166.3 593.8 166.2 585.4 170.7C577.0 175.2 578.5 175.6 573.5 177.3C568.5 179.0 573.0 178.7 567.6 176.8C562.2 174.9 561.8 174.8 554.3 170.7C546.8 166.6 545.8 166.2 541.3 162.5C536.8 158.8 535.4 162.5 538.3 157.6Z" fill="#7b81d8" stroke="#262ecf" stroke-width="1" stroke-linejoin="round"/><path d="M554 170.8V174.6M602.8 161.6L603.4 166.2" stroke="#262ecf" stroke-width="0.8"/><path d="M457.9 373L481 361.4" stroke="#e23a2c" stroke-width="2.4"/><path d="M457.9 373L443.4 358" stroke="#2fc040" stroke-width="2.4"/><path d="M457.9 373L455.7 354.4" stroke="#1c22c4" stroke-width="2.4"/><text x="443.8" y="255.3" font-size="8.7" fill="#111" font-family="Liberation Sans, sans-serif">0.1</text><text x="506" y="326.3" font-size="8.7" fill="#111" font-family="Liberation Sans, sans-serif">0</text><text x="560.5" y="401.5" font-size="8.7" fill="#111" font-family="Liberation Sans, sans-serif">−0.1</text><text x="647.5" y="412.5" font-size="8.7" fill="#111" font-family="Liberation Sans, sans-serif">−0.1</text><text x="417.3" y="206.2" font-size="8.7" fill="#111" font-family="Liberation Sans, sans-serif">01</text><text x="417.3" y="213.6" font-size="8.7" fill="#111" font-family="Liberation Sans, sans-serif">0</text><text x="437.3" y="356" font-size="10" fill="#1c2430" font-family="Liberation Sans, sans-serif">y</text><text x="453.4" y="354.6" font-size="10" fill="#1c2430" font-family="Liberation Sans, sans-serif">z</text><text x="482.5" y="363.2" font-size="10" fill="#1c2430" font-family="Liberation Sans, sans-serif">x</text></svg>
<div class="panel" style="left:415px;top:417.5px;width:320px;height:97.5px;border-color:#b4b9c3;border-bottom-color:#adb0b6"></div>
<div style="left:416px;top:418.5px;width:314px;height:16.5px;background:linear-gradient(#f4f4f5,#eeeeef);border-radius:4px 0 0 0"></div>
<div style="left:416px;top:435px;width:314px;height:1px;background:#b4b9c3"></div>
<svg style="left:415px;top:417.5px" width="95" height="19.5" viewBox="0 0 95 19.5"><path d="M0.5 19.5 L0.5 5 Q0.5 0.5 5 0.5 L72 0.5 C82 0.5 80 18 92 18 L92 19.5 Z" fill="#fff"/><path d="M0.5 19.5 L0.5 5 Q0.5 0.5 5 0.5 L72 0.5 C82 0.5 80 18 92 18" fill="none" stroke="#a9afba" stroke-width="1"/></svg>
<svg style="left:418.5px;top:424px" width="10" height="8" viewBox="0 0 10 8"><rect x="0.5" y="0.5" width="9" height="6.6" fill="#fbfbfb" stroke="#8a9098" stroke-width="0.9"/><path d="M1 1L5 4L9 1" stroke="#a0a6ae" fill="none" stroke-width="0.8"/></svg>
<div class="t" style="left:433.2px;top:420.6px;font-size:9.4px;color:#222;letter-spacing:-0.1px">Messages</div>
<svg style="left:480px;top:424px" width="8" height="8" viewBox="0 0 8 8"><path d="M0.8 0.8L6.8 6.8M6.8 0.8L0.8 6.8" stroke="#8a9098" stroke-width="2"/><path d="M0.8 0.8L6.8 6.8M6.8 0.8L0.8 6.8" stroke="#fff" stroke-width="0.7"/></svg>
<svg style="left:505px;top:425px" width="11" height="5" viewBox="0 0 11 5"><rect x="0.4" y="0.4" width="10" height="4" fill="#fff" stroke="#8a9098" stroke-width="0.8"/><rect x="1" y="1" width="5.5" height="2.8" fill="#8cc63c"/></svg>
<div class="t" style="left:519px;top:420.4px;color:#111"><span class="c">进度</span></div>
<div style="left:541.5px;top:420px;width:1px;height:15px;background:#c0c4cc"></div>
<svg style="left:546.3px;top:423px" width="9" height="10" viewBox="0 0 9 10"><rect x="0.5" y="0.5" width="7.6" height="9" fill="#fff" stroke="#7a9ac0" stroke-width="0.9"/><path d="M2 3H6.5M2 5H6.5M2 7H6.5" stroke="#7ab0d8" stroke-width="0.9"/></svg>
<div class="t" style="left:559.5px;top:420.4px;color:#111"><span class="c">结果</span></div>
<div style="left:581.2px;top:420px;width:1px;height:15px;background:#c0c4cc"></div>
<div class="t" style="left:418px;top:435.6px;font-size:9.3px;color:#1a1a1a;letter-spacing:-0.2px">COMSOL 4.0.0.929</div>
<div style="left:416px;top:500.5px;width:314px;height:13.5px;background:#ececec;border-top:1px solid #f6f6f6"></div>
<svg style="left:421.5px;top:503.5px" width="4" height="6" viewBox="0 0 4 6"><path d="M3.4 0.3L0.4 2.8L3.4 5.3Z" fill="#555"/></svg>
<div style="left:0;top:515px;width:730px;height:20px;background:#f0f0f0"></div>
<div style="left:653px;top:519px;width:1px;height:16px;background:#d2d2d2"></div>
<div style="left:654px;top:519px;width:1px;height:16px;background:#fafafa"></div>
<div class="t" style="left:658.6px;top:517.7px;color:#111"><span class="c" style="letter-spacing:1.3px">工作集</span>: 290 MB</div>
<div style="left:730px;top:0;width:6px;height:535px;background:#050505"></div>
</div></div>
</body>
</html>
